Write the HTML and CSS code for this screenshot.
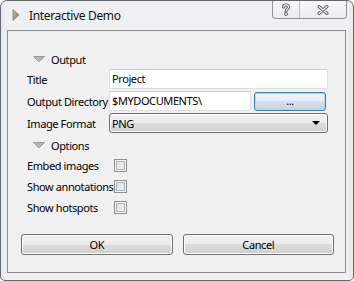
FILE: index.html
```html
<!DOCTYPE html>
<html>
<head>
<meta charset="utf-8">
<title>Interactive Demo</title>
<link rel="stylesheet" href="styles.css">
</head>
<body>
<div class="window">
  <div class="titlebar">
    <svg class="app-icon" width="8" height="12" viewBox="0 0 8 12">
      <defs>
        <linearGradient id="ig" x1="0" y1="0" x2="1" y2="1">
          <stop offset="0" stop-color="#b9c3ad"/>
          <stop offset="1" stop-color="#6f7d63"/>
        </linearGradient>
      </defs>
      <polygon points="1,0.5 7,6 1,11.5" fill="url(#ig)" stroke="#7b8870" stroke-width="0.8"/>
    </svg>
    <span class="title">Interactive Demo</span>
    <div class="caption-buttons">
      <div class="cap-btn help">
        <svg width="10" height="13" viewBox="0 0 10 13">
          <path d="M2.5,4 C2.5,1.2 7.5,1.2 7.5,4 C7.5,6 5,6 5,8" fill="none" stroke="#5a5a5a" stroke-width="3" stroke-linecap="round"/>
          <path d="M2.5,4 C2.5,1.2 7.5,1.2 7.5,4 C7.5,6 5,6 5,8" fill="none" stroke="#f4f4f4" stroke-width="1.2" stroke-linecap="round"/>
          <circle cx="5" cy="11" r="1.5" fill="#f4f4f4" stroke="#5a5a5a" stroke-width="0.9"/>
        </svg>
      </div>
      <div class="cap-btn close">
        <svg width="12" height="10" viewBox="0 0 12 10">
          <path d="M2,1.5 L10,8.5 M10,1.5 L2,8.5" fill="none" stroke="#5a5a5a" stroke-width="3" stroke-linecap="round"/>
          <path d="M2,1.5 L10,8.5 M10,1.5 L2,8.5" fill="none" stroke="#f4f4f4" stroke-width="1.2" stroke-linecap="round"/>
        </svg>
      </div>
    </div>
  </div>
  <div class="client">
    <div class="section">
      <svg class="expander" width="12" height="6" viewBox="0 0 12 6"><polygon points="0.5,0.5 11.5,0.5 6,5.8" fill="#b4bab0" stroke="#959d92" stroke-width="1"/></svg>
      <span>Output</span>
    </div>
    <div class="form">
      <span class="label">Title</span>
      <div class="input">Project</div>
      <span class="label">Output Directory</span>
      <div class="dir-row">
        <div class="input">$MYDOCUMENTS\</div>
        <div class="btn browse">...</div>
      </div>
      <span class="label">Image Format</span>
      <div class="combo"><span>PNG</span><span class="drop"></span></div>
    </div>
    <div class="section options">
      <svg class="expander" width="12" height="6" viewBox="0 0 12 6"><polygon points="0.5,0.5 11.5,0.5 6,5.8" fill="#b4bab0" stroke="#959d92" stroke-width="1"/></svg>
      <span>Options</span>
    </div>
    <div class="checks">
      <span class="label">Embed images</span><span class="check"></span>
      <span class="label">Show annotations</span><span class="check"></span>
      <span class="label">Show hotspots</span><span class="check"></span>
    </div>
    <div class="buttons">
      <div class="btn">OK</div>
      <div class="btn">Cancel</div>
    </div>
  </div>
</div>
</body>
</html>
```

FILE: styles.css
```css
html, body {
  margin: 0;
  padding: 0;
  background: #ffffff;
}

body {
  font-family: "Noto Sans", "Open Sans", sans-serif;
  font-size: 11px;
  letter-spacing: -0.4px;
  color: #000;
}

.window {
  box-sizing: border-box;
  width: 354px;
  height: 281px;
  border: 1px solid #62676c;
  border-radius: 7px 7px 5px 5px;
  padding: 0 7px 7px 6px;
  background: linear-gradient(90deg, #e2e9f0 0, #eef0f2 6px, #eef0f2 346px, #e6ebf0 100%);
  display: flex;
  flex-direction: column;
}

.titlebar {
  height: 29px;
  flex: none;
  display: flex;
  align-items: flex-start;
}

.app-icon {
  margin: 8px 0 0 5px;
  flex: none;
}

.title {
  margin: 6px 0 0 9px;
  font-size: 12px;
  line-height: 17px;
  letter-spacing: -0.35px;
  color: #111;
}

.caption-buttons {
  margin-left: auto;
  margin-right: -1px;
  display: flex;
  height: 17px;
  border: 1px solid #8f959b;
  border-top: none;
  border-radius: 0 0 4px 4px;
  background: linear-gradient(#f7f8f9, #e9ecef);
  overflow: hidden;
}

.cap-btn {
  display: flex;
  align-items: center;
  justify-content: center;
}

.cap-btn.help {
  width: 26px;
  border-right: 1px solid #b6bbc0;
}

.cap-btn.close {
  width: 46px;
}

.client {
  flex: 1;
  border: 1px solid #8d8d8d;
  background: #f0f0f0;
  padding: 18px 17px 0 19px;
  display: flex;
  flex-direction: column;
}

.section {
  height: 20px;
  display: flex;
  align-items: center;
  padding-left: 6px;
}

.section .expander {
  margin-right: 6px;
}

.section.options {
  margin-top: 2px;
}

.form {
  display: grid;
  grid-template-columns: 82px 1fr;
  grid-auto-rows: 20px;
  row-gap: 2px;
  align-items: center;
}

.label {
  white-space: nowrap;
}

.input {
  box-sizing: border-box;
  height: 20px;
  background: #fff;
  border: 1px solid #dcdfe3;
  border-top-color: #c9cdd2;
  border-radius: 2px;
  padding-left: 2px;
  line-height: 18px;
}

.dir-row {
  display: flex;
  height: 20px;
}

.dir-row .input {
  flex: 1;
}

.btn {
  box-sizing: border-box;
  border: 1px solid #707070;
  border-radius: 3px;
  background: linear-gradient(#f2f2f2 0, #ebebeb 50%, #dddddd 50%, #cfcfcf 100%);
  box-shadow: inset 0 0 0 1px #fcfcfc;
  display: flex;
  align-items: center;
  justify-content: center;
}

.btn.browse {
  width: 72px;
  height: 19px;
  margin: 1px 2px 0 3px;
  border-color: #3c7fb1;
  box-shadow: inset 0 0 0 1px #a8dcf3;
  background: linear-gradient(#eef6fb 0, #e4eef5 50%, #d6e2ea 50%, #c8d4dc 100%);
  line-height: 12px;
  align-items: flex-start;
  padding-top: 2px;
}

.combo {
  box-sizing: border-box;
  height: 20px;
  border: 1px solid #707070;
  border-radius: 3px;
  background: linear-gradient(#f2f2f2 0, #ebebeb 50%, #dddddd 50%, #cfcfcf 100%);
  box-shadow: inset 0 0 0 1px #fafafa;
  display: flex;
  align-items: center;
  padding: 0 7px 0 2px;
}

.combo .drop {
  margin-left: auto;
  width: 0;
  height: 0;
  border-left: 4px solid transparent;
  border-right: 4px solid transparent;
  border-top: 4px solid #000;
}

.checks {
  display: grid;
  grid-template-columns: 87px 13px;
  grid-auto-rows: 21px;
  align-items: center;
}

.check {
  box-sizing: border-box;
  width: 13px;
  height: 13px;
  border: 1px solid #8e8f8f;
  background: linear-gradient(135deg, #dcdcdc 0, #f6f6f6 100%);
  box-shadow: inset 0 0 0 1px #f4f4f4, inset 0 0 0 2px #aeb3b9;
}

.buttons {
  margin: 16px -6px 0 -6px;
  display: flex;
  gap: 10px;
}

.buttons .btn {
  flex: 1;
  height: 21px;
}
```
